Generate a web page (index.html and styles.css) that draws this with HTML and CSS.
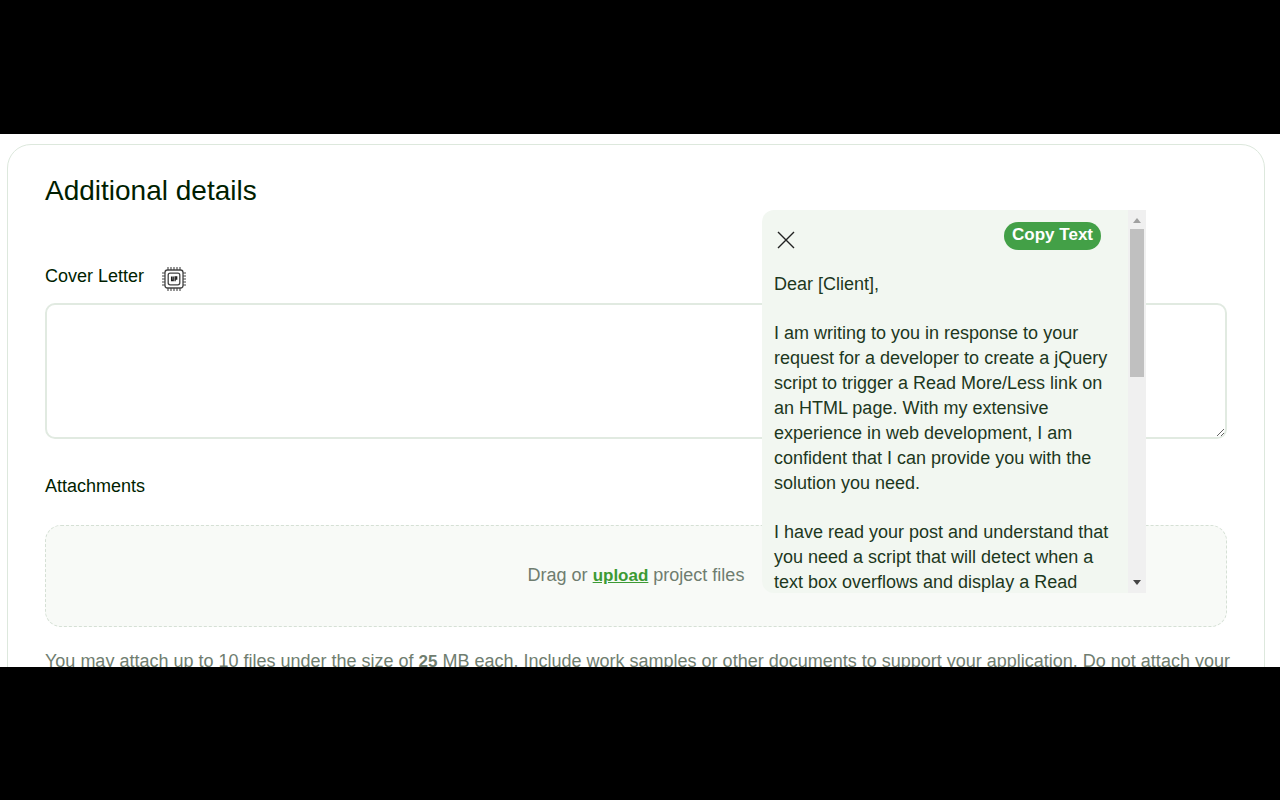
FILE: index.html
```
<!DOCTYPE html>
<html lang="en">
<head>
  <meta charset="UTF-8">
  <meta name="viewport" content="width=device-width, initial-scale=1.0">
  <title>Additional details</title>
  <link rel="stylesheet" href="styles.css">
</head>
<body>
  <main class="screen">
    <section class="card">
      <h1>Additional details</h1>

      <div class="label-row">
        <label for="cover-letter">Cover Letter</label>
        <button class="chip-btn" type="button" aria-label="Generate cover letter">
          <svg width="24" height="24" viewBox="0 0 24 24" fill="none" stroke="#444">
            <rect x="3" y="3" width="18" height="18" rx="2.5" stroke-width="1.3"/>
            <rect x="6.2" y="6.2" width="11.6" height="11.6" rx="2" stroke-width="1.3"/>
            <path stroke-width="1.1" d="M6 0v3M9 0v3M12 0v3M15 0v3M18 0v3M6 21v3M9 21v3M12 21v3M15 21v3M18 21v3M0 6h3M0 9h3M0 12h3M0 15h3M0 18h3M21 6h3M21 9h3M21 12h3M21 15h3M21 18h3"/>
            <path stroke="#222" stroke-width="1.3" d="M9.6 9.5v4h1.6v-4M13.1 14.2V10h1.6v2h-1.6"/>
          </svg>
        </button>
      </div>
      <textarea id="cover-letter"></textarea>

      <h2>Attachments</h2>
      <div class="dropzone">
        <p>Drag or <a href="#">upload</a> project files</p>
      </div>
      <p class="hint">You may attach up to 10 files under the size of <b>25</b> MB each. Include work samples or other documents to support your application. Do not attach your</p>
    </section>

    <aside class="popup">
      <div class="popup-body">
        <div class="popup-head">
          <button class="close-btn" type="button" aria-label="Close">
            <svg width="18" height="18" viewBox="0 0 18 18" stroke="#222" stroke-width="1.4">
              <path d="M1 1l16 16M17 1L1 17"/>
            </svg>
          </button>
          <button class="copy-btn" type="button">Copy Text</button>
        </div>
        <p>Dear [Client],</p>
        <p>I am writing to you in response to your<br>request for a developer to create a jQuery<br>script to trigger a Read More/Less link on<br>an HTML page. With my extensive<br>experience in web development, I am<br>confident that I can provide you with the<br>solution you need.</p>
        <p>I have read your post and understand that<br>you need a script that will detect when a<br>text box overflows and display a Read</p>
      </div>
      <div class="scrollbar">
        <svg width="8" height="5" viewBox="0 0 8 5" fill="#a0a0a0"><path d="M0 5l4-5 4 5z"/></svg>
        <div class="track"><div class="thumb"></div></div>
        <svg width="8" height="5" viewBox="0 0 8 5" fill="#444"><path d="M0 0l4 5 4-5z"/></svg>
      </div>
    </aside>
  </main>
</body>
</html>
```
FILE: styles.css
```
* {
  box-sizing: border-box;
}

body {
  display: flex;
  height: 100vh;
  margin: 0;
  padding: 134px 0 133px;
  background: #000;
  color: #001e00;
  font-family: "Liberation Sans", Arial, sans-serif;
  font-size: 18px;
  line-height: 25px;
}

h1, h2, p {
  margin: 0;
}

button {
  padding: 0;
  border: none;
  background: none;
  font-family: inherit;
  cursor: pointer;
}

svg {
  display: block;
}

.screen {
  position: relative;
  flex: 1;
  min-width: 0;
  overflow: hidden;
  padding: 10px 15px 0 7px;
  background: #fff;
}

.card {
  padding: 28px 37px 40px;
  border: 1px solid #dde8dd;
  border-radius: 24px;
}

h1 {
  font-size: 28px;
  font-weight: 400;
  line-height: 36px;
}

.label-row {
  display: flex;
  align-items: flex-start;
  gap: 18px;
  margin-top: 55px;
}

.chip-btn {
  margin-top: 3px;
}

textarea {
  display: block;
  width: 100%;
  height: 136px;
  margin-top: 12px;
  padding: 12px;
  border: 2px solid #e1eae1;
  border-radius: 10px;
  background: #fff;
  font: inherit;
  resize: vertical;
}

h2 {
  margin-top: 35px;
  font-size: 18px;
  font-weight: 400;
}

.dropzone {
  display: flex;
  align-items: center;
  justify-content: center;
  height: 102px;
  margin-top: 26px;
  padding-bottom: 2px;
  border: 1px dashed #d5e0d5;
  border-radius: 16px;
  background: #f8faf7;
  color: #6f7d6f;
}

.dropzone a {
  color: #3c9a34;
  font-size: 17px;
  font-weight: 700;
}

.hint {
  margin-top: 22px;
  color: #6f7d6f;
  white-space: nowrap;
}

.hint b {
  font-size: 17px;
}

.popup {
  position: absolute;
  top: 76px;
  right: 134px;
  display: flex;
  width: 384px;
  height: 383px;
  overflow: hidden;
  border-radius: 12px 0 0 12px;
  background: #f2f7f1;
  color: #1d371d;
}

.popup-body {
  flex: 1;
  overflow: hidden;
  padding: 12px;
}

.popup-body p {
  margin-bottom: 24px;
  white-space: nowrap;
}

.popup-head {
  display: flex;
  justify-content: space-between;
  align-items: flex-start;
  height: 50px;
  padding: 0 15px 0 3px;
}

.close-btn {
  margin-top: 9px;
}

.copy-btn {
  height: 28px;
  padding: 0 8px 2px;
  border-radius: 14px;
  background: #43a047;
  color: #fff;
  font-size: 17px;
  font-weight: 700;
}

.scrollbar {
  display: flex;
  flex-direction: column;
  align-items: center;
  gap: 6px;
  width: 18px;
  padding: 8px 0;
  background: #f0f0f0;
}

.track {
  flex: 1;
}

.thumb {
  width: 14px;
  height: 148px;
  background: #c0c0c0;
}
```
